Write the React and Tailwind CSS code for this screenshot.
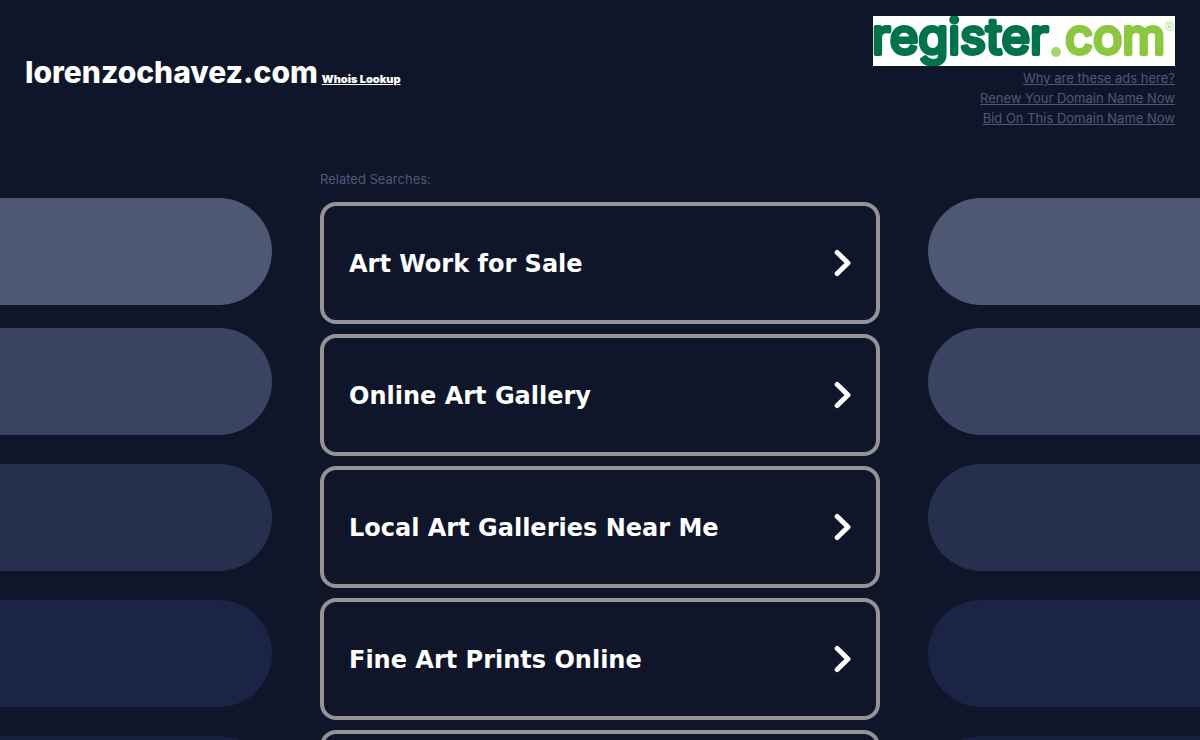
import React from 'react';

const searches = [
  'Art Work for Sale',
  'Online Art Gallery',
  'Local Art Galleries Near Me',
  'Fine Art Prints Online',
  'Art Gallery',
];

const headerLinks = [
  'Why are these ads here?',
  'Renew Your Domain Name Now',
  'Bid On This Domain Name Now',
];

// Light to dark, top to bottom
const pillColors = ['bg-[#4f5873]', 'bg-[#3b4362]', 'bg-[#262f4e]', 'bg-[#1b2444]', 'bg-[#182040]'];

const RegisterLogo = () => (
  <svg viewBox="0 0 302 50" className="block h-[50px] w-[302px] bg-white" role="img" aria-label="register.com">
    <g fontFamily="Inter, sans-serif" fontWeight="400" fontSize="49" strokeWidth="4" strokeLinejoin="round" strokeLinecap="round">
      <text x="-1" y="38" fill="#00734a" stroke="#00734a">register</text>
      <text x="192" y="38" fill="#8dc63f" stroke="#8dc63f">com</text>
    </g>
    <circle cx="183" cy="36" r="5" fill="#a9d46f" />
    <text x="292" y="15" fontFamily="'Liberation Sans', sans-serif" fontSize="12" fill="#a9d46f">®</text>
  </svg>
);

const Chevron = () => (
  <svg viewBox="0 0 18 28" className="h-7 w-[18px] shrink-0" fill="none" aria-hidden="true">
    <path d="M3.2 3.5 L14 14 L3.2 24.5" stroke="#fff" strokeWidth="5" strokeLinecap="round" strokeLinejoin="round" />
  </svg>
);

const SearchCard = ({ title }) => (
  <a
    href="#"
    className="flex h-[122px] items-center justify-between rounded-2xl border-4 border-[#949498] pl-[25px] pr-6 font-['DejaVu_Sans',sans-serif] text-2xl font-bold text-white"
  >
    <span className="pt-0.5">{title}</span>
    <Chevron />
  </a>
);

// Decorative pills on either side of the list
const Pills = ({ side }) => (
  <div className={`flex flex-col pt-[27px] ${side === 'left' ? 'mr-12' : 'ml-12'}`} aria-hidden="true">
    {pillColors.map((color, index) => (
      <div
        key={color}
        className={`h-[107px] ${color} ${side === 'left' ? 'rounded-r-full' : 'rounded-l-full'} ${
          index === 0 ? 'mb-[23px]' : 'mb-[29px]'
        }`}
      />
    ))}
  </div>
);

const App = () => {
  return (
    <div className="min-h-screen bg-[#101629] font-[Inter,sans-serif]">
      {/* Header */}
      <header className="flex items-start justify-between px-[25px] pt-4">
        <div className="flex items-baseline gap-1 pt-9 text-white">
          <h1 className="text-[30px] leading-10 font-extrabold">lorenzochavez.com</h1>
          <a href="#" className="text-[11px] font-black underline">Whois Lookup</a>
        </div>
        <div className="flex flex-col items-end">
          <RegisterLogo />
          <nav className="mt-0.5 flex flex-col items-end text-[13px] leading-5 text-[#4f5877]">
            {headerLinks.map((link) => (
              <a key={link} href="#" className="underline">{link}</a>
            ))}
          </nav>
        </div>
      </header>

      {/* Related searches */}
      <main className="mt-[43px] grid grid-cols-[1fr_minmax(0,560px)_1fr]">
        <Pills side="left" />
        <section>
          <h2 className="text-[13px] leading-4 text-[#4f5877]">Related Searches:</h2>
          <div className="mt-[15px] flex flex-col gap-2.5">
            {searches.map((title) => (
              <SearchCard key={title} title={title} />
            ))}
          </div>
        </section>
        <Pills side="right" />
      </main>
    </div>
  );
};

export default App;
